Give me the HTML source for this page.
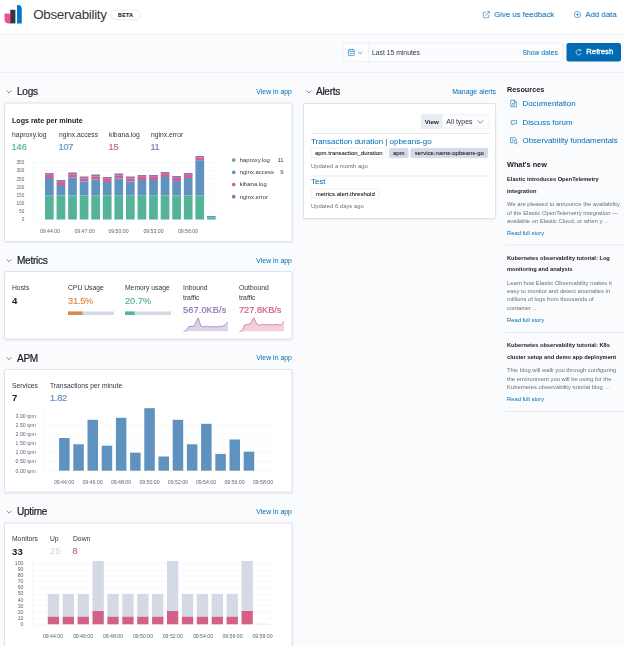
<!DOCTYPE html>
<html><head><meta charset="utf-8"><title>Observability</title>
<style>
html,body{margin:0;padding:0}
body{width:624px;height:646px;overflow:hidden;background:#fafbfd;font-family:"Liberation Sans",Arial,sans-serif;color:#343741;position:relative;-webkit-font-smoothing:antialiased}
.a{position:absolute;white-space:nowrap;line-height:1}
.hdr{position:absolute;left:0;top:0;width:624px;height:34px;background:#fff;border-bottom:1px solid #eceff4}
.bar2{position:absolute;left:0;top:35px;width:624px;height:37px;border-bottom:1px solid #eceff4}
.panel{position:absolute;background:#fff;border:1px solid #dde2ec;border-radius:2px;box-shadow:0 1px 2px rgba(152,162,179,.16);box-sizing:border-box}
.blue{color:#006bb4}
.sec{font-size:10.1px;color:#1a1c21;letter-spacing:-0.3px;margin-top:0px;-webkit-text-stroke:0.2px #1a1c21}
.lnk{font-size:6.9px;color:#006bb4}
.lab{font-size:6.75px;color:#343741}
.val{font-size:9.2px;letter-spacing:0;-webkit-text-stroke:0.18px currentColor;margin-top:-0.2px}
.b{font-weight:bold}
.tk{font-size:5.2px;fill:#5e6573;font-family:"Liberation Sans",Arial,sans-serif}
.lg{font-size:5.9px;fill:#343741;font-family:"Liberation Sans",Arial,sans-serif}
.badge{position:absolute;box-sizing:border-box;height:10px;line-height:9px;font-size:6px;color:#111;-webkit-text-stroke:0.05px #111;border-radius:1.5px;text-align:center;white-space:nowrap}
.bw{background:#fff;border:0.5px solid #dde2eb}
.bg{background:#d3dae6;border:0.5px solid #d3dae6}
.nt{font-size:5.7px;margin-top:-0.2px;font-weight:bold;color:#1a1c21;line-height:11.6px;position:absolute;white-space:nowrap}
.nb{font-size:5.84px;color:#69707d;line-height:8.3px;position:absolute;white-space:nowrap}
.hr{position:absolute;height:1px;background:#e6eaf0}
svg{position:absolute;left:0;top:0;overflow:visible}
#s{position:absolute;left:0;top:0;width:1248px;height:1292px;transform:scale(0.5);transform-origin:0 0}
#z{position:absolute;left:0;top:0;width:624px;height:646px;zoom:2}
</style></head><body>
<div id="s"><div id="z">
<div class="hdr"></div>
<div class="bar2"></div>

<!-- logo -->
<svg width="624" height="646" viewBox="0 0 624 646">
<path d="M4.5 13.5 h6 v9.9 h-2.2 a3.8 3.8 0 0 1 -3.8 -3.8 z" fill="#f04e98"/>
<rect x="10.25" y="9.8" width="5.15" height="13.6" fill="#343741"/>
<path d="M17.05 4.9 h0.9 a3.8 3.8 0 0 1 3.8 3.8 v14.7 h-4.7 z" fill="#0077cc"/>
</svg>
<div class="a" style="left:33.2px;top:8.1px;font-size:13.4px;color:#343741;letter-spacing:-0.31px">Observability</div>
<div class="a" style="left:110.5px;top:10px;width:30.5px;height:10px;-webkit-text-stroke:0.15px #1a1c21;border:0.75px solid #cfd6e3;border-radius:5px;box-sizing:border-box;font-size:5.1px;font-weight:bold;text-align:center;line-height:9px;color:#1a1c21;letter-spacing:0.45px">BETA</div>

<!-- header links -->
<svg width="624" height="646" viewBox="0 0 624 646" fill="none" stroke="#006bb4" stroke-width="0.55">
<path d="M486.2 12.2 h-2.3 a0.6 0.6 0 0 0 -0.6 0.6 v4.3 a0.6 0.6 0 0 0 0.6 0.6 h4.3 a0.6 0.6 0 0 0 0.6 -0.6 v-2.3"/>
<path d="M485.5 15.5 l3.7 -3.7 M487.2 11.6 h2.2 v2.2"/>
<circle cx="577.5" cy="14.6" r="3.2"/>
<path d="M577.5 12.8 v3.6 M575.7 14.6 h3.6"/>
</svg>
<div class="a blue" style="left:494px;top:9.8px;font-size:7.8px">Give us feedback</div>
<div class="a blue" style="left:585.3px;top:9.8px;font-size:7.8px">Add data</div>

<!-- date picker -->
<div class="a" style="left:343px;top:43px;width:220px;height:19px;background:#fbfcfd;border:0.5px solid #e3e8f0;box-sizing:border-box;border-radius:1px"></div>
<div class="a" style="left:343px;top:43px;width:25.7px;height:19px;border-right:0.5px solid #e3e8f0;box-sizing:border-box"></div>
<svg width="624" height="646" viewBox="0 0 624 646" fill="none" stroke="#006bb4" stroke-width="0.6">
<rect x="348.4" y="49.6" width="5.8" height="6" rx="0.6"/>
<path d="M348.4 51.4 h5.8 M350 48.8 v1.3 M352.6 48.8 v1.3 M349.8 53.5 h3"/>
<path d="M357.9 51.6 l2.3 2.3 l2.3 -2.3"/>
</svg>
<div class="a" style="left:372px;top:49.3px;font-size:6.8px;color:#343741">Last 15 minutes</div>
<div class="a blue" style="left:522.5px;top:49.3px;font-size:6.75px">Show dates</div>
<div class="a" style="left:566.5px;top:43px;width:54.7px;height:18.7px;background:#006bb4;border-radius:2px"></div>
<svg width="624" height="646" viewBox="0 0 624 646" fill="none" stroke="#fff" stroke-width="0.7">
<path d="M580.6 50.6 a2.6 2.6 0 1 0 0.5 2.6"/>
<path d="M579.2 50.6 h1.6 v-1.6" stroke-width="0.6"/>
</svg>
<div class="a" style="left:586.3px;top:47.5px;font-size:7.7px;color:#fff;-webkit-text-stroke:0.3px #fff">Refresh</div>

<!-- section headers -->
<svg width="624" height="646" viewBox="0 0 624 646" fill="none" stroke="#343741" stroke-width="0.6">
<path d="M6.6 90.5 l2.4 2.4 l2.4 -2.4"/>
<path d="M6.6 259.3 l2.4 2.4 l2.4 -2.4"/>
<path d="M6.6 357.2 l2.4 2.4 l2.4 -2.4"/>
<path d="M6.6 510.8 l2.4 2.4 l2.4 -2.4"/>
<path d="M306.6 90.5 l2.4 2.4 l2.4 -2.4"/>
</svg>
<div class="a sec" style="left:17px;top:86px">Logs</div>
<div class="a sec" style="left:17px;top:254.8px">Metrics</div>
<div class="a sec" style="left:17px;top:352.8px">APM</div>
<div class="a sec" style="left:17px;top:506.3px">Uptime</div>
<div class="a sec" style="left:316px;top:86px">Alerts</div>
<div class="a lnk" style="right:332.1px;top:88px">View in app</div>
<div class="a lnk" style="right:332.1px;top:257px">View in app</div>
<div class="a lnk" style="right:332.1px;top:354px">View in app</div>
<div class="a lnk" style="right:332.1px;top:508px">View in app</div>
<div class="a lnk" style="right:128px;top:88px">Manage alerts</div>

<!-- panels -->
<div class="panel" style="left:4px;top:102.5px;width:288.3px;height:139.3px"></div>
<div class="panel" style="left:4px;top:271.2px;width:288.3px;height:68.2px"></div>
<div class="panel" style="left:4px;top:369px;width:288.3px;height:123.7px"></div>
<div class="panel" style="left:4px;top:522.7px;width:288.3px;height:130px"></div>
<div class="panel" style="left:303px;top:103px;width:193px;height:116px"></div>

<!-- LOGS -->
<div class="a b" style="left:12px;top:116.5px;font-size:7.15px;color:#1a1c21">Logs rate per minute</div>
<div class="a lab" style="left:12px;top:131px">haproxy.log</div>
<div class="a lab" style="left:59px;top:131px">nginx.access</div>
<div class="a lab" style="left:109px;top:131px">kibana.log</div>
<div class="a lab" style="left:151px;top:131px">nginx.error</div>
<div class="a val" style="left:11.5px;top:142.1px;color:#54b399">146</div>
<div class="a val" style="left:58.5px;top:142.1px;color:#6092c0;letter-spacing:-0.2px">107</div>
<div class="a val" style="left:108.5px;top:142.1px;color:#d36086">15</div>
<div class="a val" style="left:150.5px;top:142.1px;color:#9170b8;letter-spacing:-0.5px">11</div>
<svg width="624" height="646" viewBox="0 0 624 646">
<line x1="33" x2="218" y1="219.50" y2="219.50" stroke="#eef0f4" stroke-width="0.5"/>
<text x="24.3" y="221.20" text-anchor="end" class="tk" style="font-size:4.7px">0</text>
<line x1="33" x2="218" y1="211.38" y2="211.38" stroke="#eef0f4" stroke-width="0.5"/>
<text x="24.3" y="213.08" text-anchor="end" class="tk" style="font-size:4.7px">50</text>
<line x1="33" x2="218" y1="203.26" y2="203.26" stroke="#eef0f4" stroke-width="0.5"/>
<text x="24.3" y="204.96" text-anchor="end" class="tk" style="font-size:4.7px">100</text>
<line x1="33" x2="218" y1="195.14" y2="195.14" stroke="#eef0f4" stroke-width="0.5"/>
<text x="24.3" y="196.84" text-anchor="end" class="tk" style="font-size:4.7px">150</text>
<line x1="33" x2="218" y1="187.02" y2="187.02" stroke="#eef0f4" stroke-width="0.5"/>
<text x="24.3" y="188.72" text-anchor="end" class="tk" style="font-size:4.7px">200</text>
<line x1="33" x2="218" y1="178.90" y2="178.90" stroke="#eef0f4" stroke-width="0.5"/>
<text x="24.3" y="180.60" text-anchor="end" class="tk" style="font-size:4.7px">250</text>
<line x1="33" x2="218" y1="170.78" y2="170.78" stroke="#eef0f4" stroke-width="0.5"/>
<text x="24.3" y="172.48" text-anchor="end" class="tk" style="font-size:4.7px">300</text>
<line x1="33" x2="218" y1="162.66" y2="162.66" stroke="#eef0f4" stroke-width="0.5"/>
<text x="24.3" y="164.36" text-anchor="end" class="tk" style="font-size:4.7px">350</text>
<line x1="33" x2="33" y1="158" y2="219.5" stroke="#eef0f4" stroke-width="0.5"/>
<rect x="45.00" y="173.00" width="8.70" height="1.80" fill="#9170b8"/>
<rect x="45.00" y="174.80" width="8.70" height="3.20" fill="#d36086"/>
<rect x="45.00" y="178.00" width="8.70" height="17.50" fill="#6092c0"/>
<rect x="45.00" y="195.50" width="8.70" height="24.00" fill="#54b399"/>
<rect x="56.57" y="180.00" width="8.70" height="1.80" fill="#9170b8"/>
<rect x="56.57" y="181.80" width="8.70" height="3.20" fill="#d36086"/>
<rect x="56.57" y="185.00" width="8.70" height="10.50" fill="#6092c0"/>
<rect x="56.57" y="195.50" width="8.70" height="24.00" fill="#54b399"/>
<rect x="68.14" y="172.50" width="8.70" height="1.80" fill="#9170b8"/>
<rect x="68.14" y="174.30" width="8.70" height="3.20" fill="#d36086"/>
<rect x="68.14" y="177.50" width="8.70" height="18.00" fill="#6092c0"/>
<rect x="68.14" y="195.50" width="8.70" height="24.00" fill="#54b399"/>
<rect x="79.71" y="176.50" width="8.70" height="1.80" fill="#9170b8"/>
<rect x="79.71" y="178.30" width="8.70" height="3.20" fill="#d36086"/>
<rect x="79.71" y="181.50" width="8.70" height="14.00" fill="#6092c0"/>
<rect x="79.71" y="195.50" width="8.70" height="24.00" fill="#54b399"/>
<rect x="91.28" y="174.50" width="8.70" height="1.80" fill="#9170b8"/>
<rect x="91.28" y="176.30" width="8.70" height="3.20" fill="#d36086"/>
<rect x="91.28" y="179.50" width="8.70" height="16.00" fill="#6092c0"/>
<rect x="91.28" y="195.50" width="8.70" height="24.00" fill="#54b399"/>
<rect x="102.85" y="177.00" width="8.70" height="1.80" fill="#9170b8"/>
<rect x="102.85" y="178.80" width="8.70" height="3.20" fill="#d36086"/>
<rect x="102.85" y="182.00" width="8.70" height="13.50" fill="#6092c0"/>
<rect x="102.85" y="195.50" width="8.70" height="24.00" fill="#54b399"/>
<rect x="114.42" y="173.50" width="8.70" height="1.80" fill="#9170b8"/>
<rect x="114.42" y="175.30" width="8.70" height="3.20" fill="#d36086"/>
<rect x="114.42" y="178.50" width="8.70" height="17.00" fill="#6092c0"/>
<rect x="114.42" y="195.50" width="8.70" height="24.00" fill="#54b399"/>
<rect x="125.99" y="176.50" width="8.70" height="1.80" fill="#9170b8"/>
<rect x="125.99" y="178.30" width="8.70" height="3.20" fill="#d36086"/>
<rect x="125.99" y="181.50" width="8.70" height="14.00" fill="#6092c0"/>
<rect x="125.99" y="195.50" width="8.70" height="24.00" fill="#54b399"/>
<rect x="137.56" y="175.00" width="8.70" height="1.80" fill="#9170b8"/>
<rect x="137.56" y="176.80" width="8.70" height="3.20" fill="#d36086"/>
<rect x="137.56" y="180.00" width="8.70" height="15.50" fill="#6092c0"/>
<rect x="137.56" y="195.50" width="8.70" height="24.00" fill="#54b399"/>
<rect x="149.13" y="175.00" width="8.70" height="1.80" fill="#9170b8"/>
<rect x="149.13" y="176.80" width="8.70" height="3.20" fill="#d36086"/>
<rect x="149.13" y="180.00" width="8.70" height="15.50" fill="#6092c0"/>
<rect x="149.13" y="195.50" width="8.70" height="24.00" fill="#54b399"/>
<rect x="160.70" y="172.00" width="8.70" height="1.80" fill="#9170b8"/>
<rect x="160.70" y="173.80" width="8.70" height="3.20" fill="#d36086"/>
<rect x="160.70" y="177.00" width="8.70" height="18.50" fill="#6092c0"/>
<rect x="160.70" y="195.50" width="8.70" height="24.00" fill="#54b399"/>
<rect x="172.27" y="176.00" width="8.70" height="1.80" fill="#9170b8"/>
<rect x="172.27" y="177.80" width="8.70" height="3.20" fill="#d36086"/>
<rect x="172.27" y="181.00" width="8.70" height="14.50" fill="#6092c0"/>
<rect x="172.27" y="195.50" width="8.70" height="24.00" fill="#54b399"/>
<rect x="183.84" y="173.00" width="8.70" height="1.80" fill="#9170b8"/>
<rect x="183.84" y="174.80" width="8.70" height="3.20" fill="#d36086"/>
<rect x="183.84" y="178.00" width="8.70" height="17.50" fill="#6092c0"/>
<rect x="183.84" y="195.50" width="8.70" height="24.00" fill="#54b399"/>
<rect x="195.41" y="156.00" width="8.70" height="1.60" fill="#9170b8"/>
<rect x="195.41" y="157.60" width="8.70" height="2.60" fill="#d36086"/>
<rect x="195.41" y="160.20" width="8.70" height="35.30" fill="#6092c0"/>
<rect x="195.41" y="195.50" width="8.70" height="24.00" fill="#54b399"/>
<rect x="206.98" y="216.00" width="8.70" height="1.60" fill="#6092c0"/>
<rect x="206.98" y="217.60" width="8.70" height="1.90" fill="#54b399"/>
<text x="50" y="233" text-anchor="middle" class="tk">09:44:00</text>
<text x="84.5" y="233" text-anchor="middle" class="tk">09:47:00</text>
<text x="118.5" y="233" text-anchor="middle" class="tk">09:50:00</text>
<text x="153.5" y="233" text-anchor="middle" class="tk">09:53:00</text>
<text x="188" y="233" text-anchor="middle" class="tk">09:56:00</text>
<circle cx="233.7" cy="160.1" r="1.85" fill="#54b399"/>
<text x="239.8" y="161.9" class="lg">haproxy.log</text>
<text x="283.5" y="161.9" text-anchor="end" class="lg">11</text>
<circle cx="233.7" cy="172.29999999999998" r="1.85" fill="#6092c0"/>
<text x="239.8" y="174.1" class="lg">nginx.access</text>
<text x="283.5" y="174.1" text-anchor="end" class="lg">9</text>
<circle cx="233.7" cy="184.5" r="1.85" fill="#d36086"/>
<text x="239.8" y="186.3" class="lg">kibana.log</text>
<circle cx="233.7" cy="196.7" r="1.85" fill="#9170b8"/>
<text x="239.8" y="198.5" class="lg">nginx.error</text>
</svg>

<!-- METRICS -->
<div class="a lab" style="left:12px;top:284px">Hosts</div>
<div class="a val b" style="left:12px;top:296px;color:#1a1c21;font-size:9.6px;letter-spacing:0.1px;-webkit-text-stroke:0">4</div>
<div class="a lab" style="left:68px;top:284px">CPU Usage</div>
<div class="a val" style="left:68px;top:296px;color:#da8b45;letter-spacing:-0.2px">31.5%</div>
<div class="a" style="left:68px;top:311.6px;width:46px;height:3.2px;background:#d3dae6"></div>
<div class="a" style="left:68px;top:311.6px;width:14.5px;height:3.2px;background:#da8b45"></div>
<div class="a lab" style="left:125px;top:284px">Memory usage</div>
<div class="a val" style="left:125px;top:296px;color:#54b399">20.7%</div>
<div class="a" style="left:125px;top:311.6px;width:46px;height:3.2px;background:#d3dae6"></div>
<div class="a" style="left:125px;top:311.6px;width:9.5px;height:3.2px;background:#54b399"></div>
<div class="a lab" style="left:183px;top:281.9px;line-height:10.7px">Inbound<br>traffic</div>
<div class="a val" style="left:183px;top:305.3px;color:#9170b8;letter-spacing:0.12px">567.0KB/s</div>
<div class="a lab" style="left:239px;top:281.9px;line-height:10.7px">Outbound<br>traffic</div>
<div class="a val" style="left:239px;top:305.3px;color:#d36086">727.8KB/s</div>
<svg width="624" height="646" viewBox="0 0 624 646">
<path d="M183.50 331.30 L186.16 330.76 L188.83 326.54 L194.16 326.13 L198.15 317.70 L200.82 326.00 L203.92 326.95 L206.59 326.13 L209.70 326.95 L213.47 326.54 L216.36 327.08 L219.46 326.13 L222.13 326.54 L225.24 324.64 L227.90 322.05 L227.90 331.30 L183.50 331.30 Z" fill="#9170b8" fill-opacity="0.3"/><path d="M183.50 331.30 L186.16 330.76 L188.83 326.54 L194.16 326.13 L198.15 317.70 L200.82 326.00 L203.92 326.95 L206.59 326.13 L209.70 326.95 L213.47 326.54 L216.36 327.08 L219.46 326.13 L222.13 326.54 L225.24 324.64 L227.90 322.05" fill="none" stroke="#9170b8" stroke-width="0.7" stroke-linejoin="round"/>
<path d="M239.40 331.30 L242.29 330.76 L244.59 325.04 L250.06 324.02 L253.83 317.70 L256.72 324.02 L259.60 325.32 L262.49 324.02 L265.37 324.98 L269.15 324.64 L273.14 324.98 L276.92 324.36 L279.80 325.32 L282.25 324.02 L283.80 321.10 L283.80 331.30 L239.40 331.30 Z" fill="#d36086" fill-opacity="0.3"/><path d="M239.40 331.30 L242.29 330.76 L244.59 325.04 L250.06 324.02 L253.83 317.70 L256.72 324.02 L259.60 325.32 L262.49 324.02 L265.37 324.98 L269.15 324.64 L273.14 324.98 L276.92 324.36 L279.80 325.32 L282.25 324.02 L283.80 321.10" fill="none" stroke="#d36086" stroke-width="0.7" stroke-linejoin="round"/>
</svg>

<!-- APM -->
<div class="a lab" style="left:12px;top:382.7px">Services</div>
<div class="a val b" style="left:12px;top:393.1px;color:#1a1c21;font-size:9.6px;letter-spacing:0.1px;-webkit-text-stroke:0">7</div>
<div class="a lab" style="left:50px;top:382.7px">Transactions per minute</div>
<div class="a val" style="left:50px;top:393.8px;color:#6092c0;letter-spacing:-0.27px">1.82</div>
<svg width="624" height="646" viewBox="0 0 624 646">
<line x1="44.5" x2="272" y1="470.70" y2="470.70" stroke="#eef0f4" stroke-width="0.5"/>
<text x="35.8" y="472.50" text-anchor="end" class="tk">0.00 tpm</text>
<line x1="44.5" x2="272" y1="461.57" y2="461.57" stroke="#eef0f4" stroke-width="0.5"/>
<text x="35.8" y="463.37" text-anchor="end" class="tk">0.50 tpm</text>
<line x1="44.5" x2="272" y1="452.44" y2="452.44" stroke="#eef0f4" stroke-width="0.5"/>
<text x="35.8" y="454.24" text-anchor="end" class="tk">1.00 tpm</text>
<line x1="44.5" x2="272" y1="443.31" y2="443.31" stroke="#eef0f4" stroke-width="0.5"/>
<text x="35.8" y="445.11" text-anchor="end" class="tk">1.50 tpm</text>
<line x1="44.5" x2="272" y1="434.18" y2="434.18" stroke="#eef0f4" stroke-width="0.5"/>
<text x="35.8" y="435.98" text-anchor="end" class="tk">2.00 tpm</text>
<line x1="44.5" x2="272" y1="425.05" y2="425.05" stroke="#eef0f4" stroke-width="0.5"/>
<text x="35.8" y="426.85" text-anchor="end" class="tk">2.50 tpm</text>
<line x1="44.5" x2="272" y1="415.92" y2="415.92" stroke="#eef0f4" stroke-width="0.5"/>
<text x="35.8" y="417.72" text-anchor="end" class="tk">3.00 tpm</text>
<line x1="44.5" x2="44.5" y1="408" y2="470.7" stroke="#eef0f4" stroke-width="0.5"/>
<rect x="59.10" y="438.00" width="10.50" height="32.70" fill="#6092c0"/>
<rect x="73.30" y="444.30" width="10.50" height="26.40" fill="#6092c0"/>
<rect x="87.50" y="419.80" width="10.50" height="50.90" fill="#6092c0"/>
<rect x="101.70" y="445.70" width="10.50" height="25.00" fill="#6092c0"/>
<rect x="115.90" y="417.80" width="10.50" height="52.90" fill="#6092c0"/>
<rect x="130.10" y="452.70" width="10.50" height="18.00" fill="#6092c0"/>
<rect x="144.30" y="408.20" width="10.50" height="62.50" fill="#6092c0"/>
<rect x="158.50" y="456.50" width="10.50" height="14.20" fill="#6092c0"/>
<rect x="172.70" y="419.80" width="10.50" height="50.90" fill="#6092c0"/>
<rect x="186.90" y="444.30" width="10.50" height="26.40" fill="#6092c0"/>
<rect x="201.10" y="423.80" width="10.50" height="46.90" fill="#6092c0"/>
<rect x="215.30" y="453.90" width="10.50" height="16.80" fill="#6092c0"/>
<rect x="229.50" y="439.50" width="10.50" height="31.20" fill="#6092c0"/>
<rect x="243.70" y="451.70" width="10.50" height="19.00" fill="#6092c0"/>
<text x="64" y="484" text-anchor="middle" class="tk">09:44:00</text>
<text x="92.5" y="484" text-anchor="middle" class="tk">09:46:00</text>
<text x="121" y="484" text-anchor="middle" class="tk">09:48:00</text>
<text x="149.5" y="484" text-anchor="middle" class="tk">09:50:00</text>
<text x="177.9" y="484" text-anchor="middle" class="tk">09:52:00</text>
<text x="206" y="484" text-anchor="middle" class="tk">09:54:00</text>
<text x="234.5" y="484" text-anchor="middle" class="tk">09:56:00</text>
<text x="263" y="484" text-anchor="middle" class="tk">09:58:00</text>
</svg>

<!-- UPTIME -->
<div class="a lab" style="left:12px;top:535.5px">Monitors</div>
<div class="a val b" style="left:12px;top:547px;color:#1a1c21;font-size:9.6px;letter-spacing:0.1px;-webkit-text-stroke:0">33</div>
<div class="a lab" style="left:50px;top:535.5px">Up</div>
<div class="a val" style="left:50.3px;top:546.8px;color:#d3dae6;letter-spacing:0.4px">25</div>
<div class="a lab" style="left:73px;top:535.5px">Down</div>
<div class="a val" style="left:72.6px;top:546.8px;color:#d36086">8</div>
<svg width="624" height="646" viewBox="0 0 624 646">
<line x1="32.5" x2="272" y1="624.30" y2="624.30" stroke="#eef0f4" stroke-width="0.5"/>
<text x="23.5" y="625.70" text-anchor="end" class="tk">0</text>
<line x1="32.5" x2="272" y1="618.25" y2="618.25" stroke="#eef0f4" stroke-width="0.5"/>
<text x="23.5" y="619.65" text-anchor="end" class="tk">10</text>
<line x1="32.5" x2="272" y1="612.20" y2="612.20" stroke="#eef0f4" stroke-width="0.5"/>
<text x="23.5" y="613.60" text-anchor="end" class="tk">20</text>
<line x1="32.5" x2="272" y1="606.15" y2="606.15" stroke="#eef0f4" stroke-width="0.5"/>
<text x="23.5" y="607.55" text-anchor="end" class="tk">30</text>
<line x1="32.5" x2="272" y1="600.10" y2="600.10" stroke="#eef0f4" stroke-width="0.5"/>
<text x="23.5" y="601.50" text-anchor="end" class="tk">40</text>
<line x1="32.5" x2="272" y1="594.05" y2="594.05" stroke="#eef0f4" stroke-width="0.5"/>
<text x="23.5" y="595.45" text-anchor="end" class="tk">50</text>
<line x1="32.5" x2="272" y1="588.00" y2="588.00" stroke="#eef0f4" stroke-width="0.5"/>
<text x="23.5" y="589.40" text-anchor="end" class="tk">60</text>
<line x1="32.5" x2="272" y1="581.95" y2="581.95" stroke="#eef0f4" stroke-width="0.5"/>
<text x="23.5" y="583.35" text-anchor="end" class="tk">70</text>
<line x1="32.5" x2="272" y1="575.90" y2="575.90" stroke="#eef0f4" stroke-width="0.5"/>
<text x="23.5" y="577.30" text-anchor="end" class="tk">80</text>
<line x1="32.5" x2="272" y1="569.85" y2="569.85" stroke="#eef0f4" stroke-width="0.5"/>
<text x="23.5" y="571.25" text-anchor="end" class="tk">90</text>
<line x1="32.5" x2="272" y1="563.80" y2="563.80" stroke="#eef0f4" stroke-width="0.5"/>
<text x="23.5" y="565.20" text-anchor="end" class="tk">100</text>
<line x1="32.5" x2="32.5" y1="561" y2="624.3" stroke="#eef0f4" stroke-width="0.5"/>
<rect x="47.80" y="594.00" width="11.30" height="22.70" fill="#d3dae6"/>
<rect x="47.80" y="616.70" width="11.30" height="7.60" fill="#d36086"/>
<rect x="62.70" y="594.00" width="11.30" height="22.70" fill="#d3dae6"/>
<rect x="62.70" y="616.70" width="11.30" height="7.60" fill="#d36086"/>
<rect x="77.60" y="594.00" width="11.30" height="22.70" fill="#d3dae6"/>
<rect x="77.60" y="616.70" width="11.30" height="7.60" fill="#d36086"/>
<rect x="92.50" y="561.00" width="11.30" height="50.00" fill="#d3dae6"/>
<rect x="92.50" y="611.00" width="11.30" height="13.30" fill="#d36086"/>
<rect x="107.40" y="594.00" width="11.30" height="22.70" fill="#d3dae6"/>
<rect x="107.40" y="616.70" width="11.30" height="7.60" fill="#d36086"/>
<rect x="122.30" y="594.00" width="11.30" height="22.70" fill="#d3dae6"/>
<rect x="122.30" y="616.70" width="11.30" height="7.60" fill="#d36086"/>
<rect x="137.20" y="594.00" width="11.30" height="22.70" fill="#d3dae6"/>
<rect x="137.20" y="616.70" width="11.30" height="7.60" fill="#d36086"/>
<rect x="152.10" y="594.00" width="11.30" height="22.70" fill="#d3dae6"/>
<rect x="152.10" y="616.70" width="11.30" height="7.60" fill="#d36086"/>
<rect x="167.00" y="561.00" width="11.30" height="50.00" fill="#d3dae6"/>
<rect x="167.00" y="611.00" width="11.30" height="13.30" fill="#d36086"/>
<rect x="181.90" y="594.00" width="11.30" height="22.70" fill="#d3dae6"/>
<rect x="181.90" y="616.70" width="11.30" height="7.60" fill="#d36086"/>
<rect x="196.80" y="594.00" width="11.30" height="22.70" fill="#d3dae6"/>
<rect x="196.80" y="616.70" width="11.30" height="7.60" fill="#d36086"/>
<rect x="211.70" y="594.00" width="11.30" height="22.70" fill="#d3dae6"/>
<rect x="211.70" y="616.70" width="11.30" height="7.60" fill="#d36086"/>
<rect x="226.60" y="594.00" width="11.30" height="22.70" fill="#d3dae6"/>
<rect x="226.60" y="616.70" width="11.30" height="7.60" fill="#d36086"/>
<rect x="241.50" y="561.00" width="11.30" height="50.00" fill="#d3dae6"/>
<rect x="241.50" y="611.00" width="11.30" height="13.30" fill="#d36086"/>
<rect x="256.40" y="623.70" width="11.30" height="0.60" fill="#d3dae6"/>
<text x="53" y="638" text-anchor="middle" class="tk">09:44:00</text>
<text x="83" y="638" text-anchor="middle" class="tk">09:46:00</text>
<text x="113" y="638" text-anchor="middle" class="tk">09:48:00</text>
<text x="143" y="638" text-anchor="middle" class="tk">09:50:00</text>
<text x="172.8" y="638" text-anchor="middle" class="tk">09:52:00</text>
<text x="203" y="638" text-anchor="middle" class="tk">09:54:00</text>
<text x="232.5" y="638" text-anchor="middle" class="tk">09:56:00</text>
<text x="262.5" y="638" text-anchor="middle" class="tk">09:58:00</text>
</svg>

<!-- ALERTS -->
<div class="a" style="left:421px;top:114.1px;width:68px;height:15px;background:#fbfcfd;border:0.5px solid #e9edf3;box-sizing:border-box;border-radius:1.5px"></div>
<div class="a b" style="left:421px;top:114.1px;width:21.5px;height:15px;background:#e9edf3;font-size:6.2px;line-height:15.8px;text-align:center;color:#1a1c21;border-radius:1.5px 0 0 1.5px">View</div>
<div class="a" style="left:446.3px;top:118.7px;font-size:6.95px;color:#343741">All types</div>
<svg width="624" height="646" viewBox="0 0 624 646" fill="none" stroke="#343741" stroke-width="0.6">
<path d="M477.6 120.4 l2.8 2.8 l2.8 -2.8"/>
</svg>
<div class="hr" style="left:310.5px;top:133px;width:179.5px"></div>
<div class="a blue" style="left:311px;top:137px;font-size:7.95px">Transaction duration | opbeans-go</div>
<div class="badge bw" style="left:311px;top:148px;width:75.5px">apm.transaction_duration</div>
<div class="badge bg" style="left:389px;top:148px;width:19.5px">apm</div>
<div class="badge bg" style="left:410.6px;top:148px;width:77.6px">service.name:opbeans-go</div>
<div class="a" style="left:311px;top:163px;font-size:5.9px;color:#69707d">Updated a month ago</div>
<div class="hr" style="left:310.5px;top:175.4px;width:179.5px"></div>
<div class="a blue" style="left:311px;top:177.5px;font-size:7.95px">Test</div>
<div class="badge bw" style="left:311px;top:188.5px;width:68.5px">metrics.alert.threshold</div>
<div class="a" style="left:311px;top:203.5px;font-size:5.9px;color:#69707d">Updated 6 days ago</div>

<!-- RESOURCES -->
<div class="a b" style="left:507px;top:85.5px;font-size:7.3px;color:#1a1c21">Resources</div>
<svg width="624" height="646" viewBox="0 0 624 646" fill="none" stroke="#006bb4" stroke-width="0.6">
<path d="M510.8 100.2 h3.6 l2 2 v4.6 h-5.6 z M514.4 100.2 v2 h2 M512.2 103.6 h2.8 M512.2 105 h2.8"/>
<path d="M511.2 120.7 h5.4 v3.1 h-3.2 l-1.3 1.2 v-1.2 h-0.9 z"/>
<path d="M510.6 137.6 h4.2 l1.2 1.2 v1.4 M510.6 137.6 v5.2 h2.4 M511.8 139.4 h1.6 M511.8 140.8 h1"/>
<circle cx="515.2" cy="141.8" r="1.5"/><path d="M516.3 142.9 l1.5 1.5"/>
</svg>
<div class="a blue" style="left:522.5px;top:99.3px;font-size:7.9px">Documentation</div>
<div class="a blue" style="left:522.5px;top:118.1px;font-size:7.9px">Discuss forum</div>
<div class="a blue" style="left:522.5px;top:136.4px;font-size:7.9px">Observability fundamentals</div>
<div class="a b" style="left:507px;top:160.5px;font-size:7.3px;color:#1a1c21">What's new</div>

<div class="nt" style="left:507px;top:173.5px">Elastic introduces OpenTelemetry<br>integration</div>
<div class="nb" style="left:507px;top:200px">We are pleased to announce the availability<br>of the Elastic OpenTelemetry integration —<br>available on Elastic Cloud, or when y…</div>
<div class="a lnk" style="left:507px;top:229.6px;font-size:5.8px">Read full story</div>
<div class="hr" style="left:505px;top:244.6px;width:119px"></div>

<div class="nt" style="left:507px;top:252.2px">Kubernetes observability tutorial: Log<br>monitoring and analysis</div>
<div class="nb" style="left:507px;top:278.5px">Learn how Elastic Observability makes it<br>easy to monitor and detect anomalies in<br>millions of logs from thousands of<br>container…</div>
<div class="a lnk" style="left:507px;top:316.7px;font-size:5.8px">Read full story</div>
<div class="hr" style="left:505px;top:332px;width:119px"></div>

<div class="nt" style="left:507px;top:339.6px">Kubernetes observability tutorial: K8s<br>cluster setup and demo app deployment</div>
<div class="nb" style="left:507px;top:366px">This blog will walk you through configuring<br>the environment you will be using for the<br>Kubernetes observability tutorial blog …</div>
<div class="a lnk" style="left:507px;top:395.6px;font-size:5.8px">Read full story</div>
<div class="hr" style="left:505px;top:411px;width:119px"></div>

</div></div>
</body></html>
